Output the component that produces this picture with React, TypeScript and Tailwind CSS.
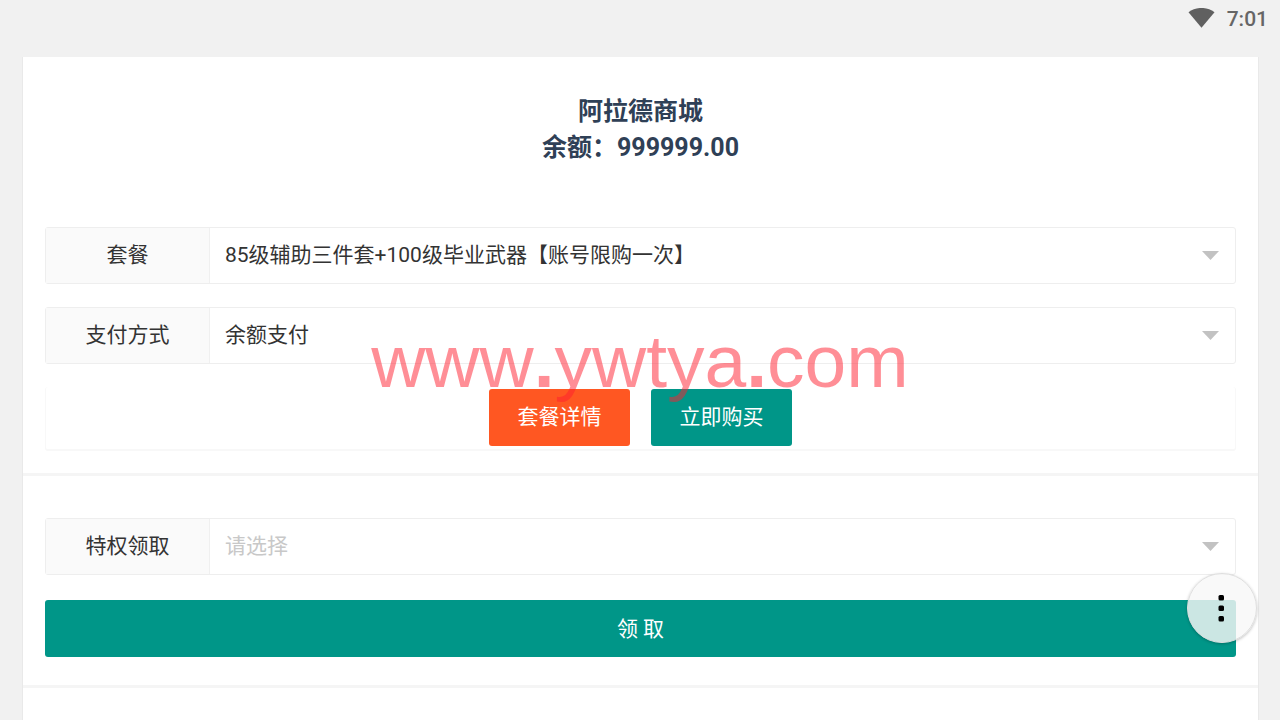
import type { ReactNode } from "react";

type FieldProps = {
  id: string;
  label: string;
  options: string[];
  placeholder?: boolean;
};

function SelectField({ id, label, options, placeholder }: FieldProps) {
  return (
    <div className="relative flex h-[57px] rounded-[3px] border border-[#eeeeee] bg-white">
      <label
        htmlFor={id}
        className="flex w-[164px] shrink-0 items-center justify-center border-r border-[#f0f0f0] bg-[#fafafa] pb-0.5 text-[#333]"
      >
        {label}
      </label>
      <select
        id={id}
        className={
          placeholder
            ? "min-w-0 flex-1 appearance-none bg-transparent pr-12 pb-0.5 pl-[15px] text-[#c8c8c8] outline-none"
            : "min-w-0 flex-1 appearance-none bg-transparent pr-12 pb-0.5 pl-[15px] text-[#333] outline-none"
        }
      >
        {options.map((option) => (
          <option key={option}>{option}</option>
        ))}
      </select>
      <svg
        className="pointer-events-none absolute top-[23px] right-4 h-[9px] w-[17px]"
        viewBox="0 0 17 9"
        aria-hidden="true"
      >
        <path d="M0 0h17L8.5 9z" fill="#c2c2c2" />
      </svg>
    </div>
  );
}

function Section({ children }: { children: ReactNode }) {
  return (
    <section className="border-b-[3px] border-[#f5f5f5] px-[22px]">
      {children}
    </section>
  );
}

export default function App() {
  return (
    <div className="relative flex min-h-screen flex-col overflow-hidden bg-[#f1f1f1] font-[Roboto,'Noto_Sans_CJK_SC',sans-serif] text-[21px] leading-8 text-[#333]">
      <header className="flex h-[37px] items-center justify-end gap-3 pr-3 font-medium text-[#666]">
        <svg className="h-[21px] w-[27px]" viewBox="0 0 27 21" aria-label="Wi-Fi">
          <path d="M0.5 4.2C8 -1.500 19 -1.500 26.500 4.200L13.500 19.800z" fill="#606060" />
        </svg>
        <time>7:01</time>
      </header>

      <main className="mt-5 mr-[21px] ml-[22px] flex flex-1 flex-col border-x border-[#e9e9e9] bg-white">
        <Section>
          <h1 className="pt-[37px] text-center text-[25px] leading-9 font-bold text-[#2f4056]">
            阿拉德商城
            <br />
            余额：999999.00
          </h1>
          <form className="flex flex-col gap-[23px] pt-[61px] pb-[22px]">
            <SelectField
              id="package"
              label="套餐"
              options={["85级辅助三件套+100级毕业武器【账号限购一次】"]}
            />
            <SelectField id="payment" label="支付方式" options={["余额支付"]} />
            <div className="flex justify-center gap-[21px] rounded-[3px] border-x border-b-2 border-[#f8f8f8] pt-0.5 pb-[3px] text-white">
              <button
                type="button"
                className="h-[57px] w-[141px] rounded-[3px] bg-[#ff5722] pb-0.5"
              >
                套餐详情
              </button>
              <button
                type="button"
                className="h-[57px] w-[141px] rounded-[3px] bg-[#009688] pb-0.5"
              >
                立即购买
              </button>
            </div>
          </form>
        </Section>

        <Section>
          <form className="flex flex-col gap-[25px] pt-[42px] pb-7">
            <SelectField
              id="privilege"
              label="特权领取"
              options={["请选择"]}
              placeholder
            />
            <button
              type="button"
              className="h-[57px] rounded-[3px] bg-[#009688] text-white"
            >
              领 取
            </button>
          </form>
        </Section>
      </main>

      <p className="pointer-events-none absolute top-[317px] left-1/2 -translate-x-1/2 font-['Liberation_Sans',sans-serif] text-[75px] leading-[88px] text-[#ff1e2d]/50">
        www<span className="font-bold">.</span>ywtya
        <span className="font-bold">.</span>com
      </p>

      <button
        type="button"
        aria-label="更多"
        className="absolute top-[573px] right-[23px] flex size-[70px] items-center justify-center rounded-full border border-[#dedede] bg-[#f8f8f8]/82 pr-0.5 shadow-[0_1px_3px_rgba(0,0,0,0.25)]"
      >
        <svg className="h-7 w-1.5" viewBox="0 0 6 28" aria-hidden="true">
          <rect x="0.500" y="1" width="5.500" height="5.500" rx="1.500" />
          <rect x="0.500" y="11.500" width="5.500" height="5.500" rx="1.500" />
          <rect x="0.500" y="22" width="5.500" height="5.500" rx="1.500" />
        </svg>
      </button>
    </div>
  );
}
